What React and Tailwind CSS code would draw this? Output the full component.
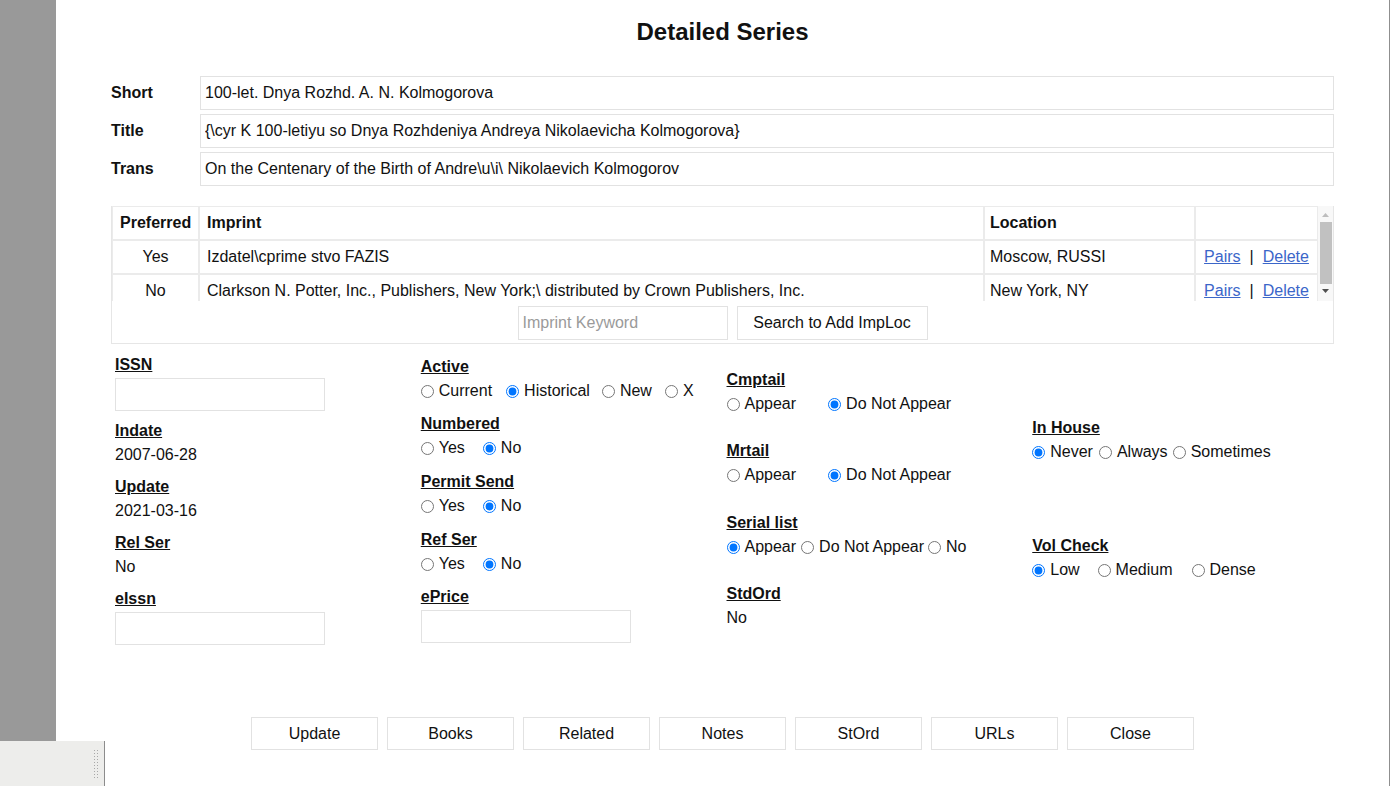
import React from 'react';

const font = { fontFamily: '"Liberation Sans", Arial, sans-serif' };

function Opt({ name, label, checked, className = '' }) {
  return (
    <label className={`inline-flex items-center gap-[5px] ${className}`}>
      <input
        type="radio"
        name={name}
        defaultChecked={checked}
        className="m-0 h-[13px] w-[13px] shrink-0"
      />
      <span>{label}</span>
    </label>
  );
}

function Lbl({ children }) {
  return <div className="font-bold underline leading-6">{children}</div>;
}

function Box({ className = '' }) {
  return <input className={`block h-[33px] w-[210px] border border-[#e2e2e2] bg-white px-1 outline-none ${className}`} />;
}

const rows = [
  ['Short', '100-let. Dnya Rozhd. A. N. Kolmogorova'],
  ['Title', '{\\cyr K 100-letiyu so Dnya Rozhdeniya Andreya Nikolaevicha Kolmogorova}'],
  ['Trans', 'On the Centenary of the Birth of Andre\\u\\i\\ Nikolaevich Kolmogorov'],
];

const imprints = [
  ['Yes', 'Izdatel\\cprime stvo FAZIS', 'Moscow, RUSSI'],
  ['No', 'Clarkson N. Potter, Inc., Publishers, New York;\\ distributed by Crown Publishers, Inc.', 'New York, NY'],
];

const buttons = ['Update', 'Books', 'Related', 'Notes', 'StOrd', 'URLs', 'Close'];

export default function App() {
  return (
    <div className="relative flex h-[786px] overflow-hidden bg-[#999999] text-[16px] text-[#111]" style={font}>
      <div className="w-[56px] shrink-0" />
      <div className="w-[1334px] shrink-0 border-r border-[#8f8f8f] bg-white px-[55px]">
        <h1 className="pt-[16px] text-center text-[24px] font-bold leading-8">Detailed Series</h1>

        <div className="mt-[28px] flex flex-col gap-[4px]">
          {rows.map(([k, v]) => (
            <div key={k} className="flex items-center">
              <div className="w-[89px] font-bold">{k}</div>
              <input
                defaultValue={v}
                className="h-[34px] flex-1 border border-[#e2e2e2] px-[4px] outline-none"
              />
            </div>
          ))}
        </div>

        <div className="mt-[20px] border border-[#e6e6e6]">
          <div className="-mt-px flex h-[95px] overflow-hidden">
            <div className="flex-1 overflow-hidden">
              <table className="w-full table-fixed border-separate border-spacing-0">
                <colgroup>
                  <col className="w-[87px]" />
                  <col className="w-[785px]" />
                  <col className="w-[211px]" />
                  <col />
                </colgroup>
                <thead>
                  <tr className="h-[34px]">
                    <th className="border border-[#ebebeb] px-[7px] text-left font-bold">Preferred</th>
                    <th className="border border-[#ebebeb] px-[7px] text-left font-bold">Imprint</th>
                    <th className="border border-[#ebebeb] px-[5px] text-left font-bold">Location</th>
                    <th className="border border-[#ebebeb]" />
                  </tr>
                </thead>
                <tbody>
                  {imprints.map(([p, imp, loc]) => (
                    <tr key={imp} className="h-[34px]">
                      <td className="border border-[#ebebeb] text-center">{p}</td>
                      <td className="whitespace-nowrap border border-[#ebebeb] px-[7px]">{imp}</td>
                      <td className="border border-[#ebebeb] px-[5px]">{loc}</td>
                      <td className="border border-[#ebebeb] text-center">
                        <a href="#" className="text-[#3b66c9] underline">Pairs</a>
                        <span className="mx-[9px]">|</span>
                        <a href="#" className="text-[#3b66c9] underline">Delete</a>
                      </td>
                    </tr>
                  ))}
                </tbody>
              </table>
            </div>
            <div className="flex w-[15px] shrink-0 flex-col items-center bg-[#f8f8f8]">
              <svg width="9" height="14" viewBox="0 0 9 14" className="mt-[2px]">
                <path d="M1 9 L4.5 5 L8 9 Z" fill="#bdbdbd" />
              </svg>
              <div className="h-[62px] w-[12px] bg-[#c1c1c1]" />
              <svg width="9" height="14" viewBox="0 0 9 14">
                <path d="M1 5 L4.5 9 L8 5 Z" fill="#505050" />
              </svg>
            </div>
          </div>
          <div className="mt-[5px] mb-[3px] flex justify-center gap-[9px]">
            <input
              placeholder="Imprint Keyword"
              className="h-[34px] w-[210px] border border-[#e2e2e2] px-[4px] outline-none placeholder:text-[#9a9a9a]"
            />
            <button className="h-[34px] w-[191px] border border-[#e2e2e2] bg-white">Search to Add ImpLoc</button>
          </div>
        </div>

        <div className="mt-[9px] grid h-[292px] grid-cols-4 items-center">
          <div className="pl-[4px]">
            <Lbl>ISSN</Lbl>
            <Box className="mt-[1px]" />
            <div className="mt-[8px]"><Lbl>Indate</Lbl></div>
            <div className="leading-6">2007-06-28</div>
            <div className="mt-[8px]"><Lbl>Update</Lbl></div>
            <div className="leading-6">2021-03-16</div>
            <div className="mt-[8px]"><Lbl>Rel Ser</Lbl></div>
            <div className="leading-6">No</div>
            <div className="mt-[8px]"><Lbl>eIssn</Lbl></div>
            <Box className="mt-[1px]" />
          </div>

          <div className="pl-[4px]">
            <Lbl>Active</Lbl>
            <div className="flex h-6 items-center">
              <Opt name="active" label="Current" className="mr-[14px]" />
              <Opt name="active" label="Historical" checked className="mr-[12px]" />
              <Opt name="active" label="New" className="mr-[13px]" />
              <Opt name="active" label="X" />
            </div>
            <div className="mt-[9px]"><Lbl>Numbered</Lbl></div>
            <div className="flex h-6 items-center">
              <Opt name="num" label="Yes" className="mr-[18px]" />
              <Opt name="num" label="No" checked />
            </div>
            <div className="mt-[10px]"><Lbl>Permit Send</Lbl></div>
            <div className="flex h-6 items-center">
              <Opt name="permit" label="Yes" className="mr-[18px]" />
              <Opt name="permit" label="No" checked />
            </div>
            <div className="mt-[10px]"><Lbl>Ref Ser</Lbl></div>
            <div className="flex h-6 items-center">
              <Opt name="refser" label="Yes" className="mr-[18px]" />
              <Opt name="refser" label="No" checked />
            </div>
            <div className="mt-[9px]"><Lbl>ePrice</Lbl></div>
            <Box className="mt-[1px]" />
          </div>

          <div className="pl-[4px]">
            <Lbl>Cmptail</Lbl>
            <div className="flex h-6 items-center">
              <Opt name="cmp" label="Appear" className="mr-[32px]" />
              <Opt name="cmp" label="Do Not Appear" checked />
            </div>
            <div className="mt-[23px]"><Lbl>Mrtail</Lbl></div>
            <div className="flex h-6 items-center">
              <Opt name="mr" label="Appear" className="mr-[32px]" />
              <Opt name="mr" label="Do Not Appear" checked />
            </div>
            <div className="mt-[24px]"><Lbl>Serial list</Lbl></div>
            <div className="flex h-6 items-center">
              <Opt name="serial" label="Appear" checked className="mr-[5px]" />
              <Opt name="serial" label="Do Not Appear" className="mr-[4px]" />
              <Opt name="serial" label="No" />
            </div>
            <div className="mt-[23px]"><Lbl>StdOrd</Lbl></div>
            <div className="leading-6">No</div>
          </div>

          <div className="pl-[4px]">
            <Lbl>In House</Lbl>
            <div className="flex h-6 items-center">
              <Opt name="house" label="Never" checked className="mr-[6px]" />
              <Opt name="house" label="Always" className="mr-[5px]" />
              <Opt name="house" label="Sometimes" />
            </div>
            <div className="mt-[70px]"><Lbl>Vol Check</Lbl></div>
            <div className="flex h-6 items-center">
              <Opt name="vol" label="Low" checked className="mr-[18px]" />
              <Opt name="vol" label="Medium" className="mr-[19px]" />
              <Opt name="vol" label="Dense" />
            </div>
          </div>
        </div>

        <div className="mt-[72px] flex justify-center gap-[9px]">
          {buttons.map((b) => (
            <button key={b} className="h-[33px] w-[127px] border border-[#e2e2e2] bg-white">
              {b}
            </button>
          ))}
        </div>
      </div>

      <div className="absolute bottom-0 left-0 flex h-[45px] w-[105px] items-center justify-end border-r border-[#8c8c8c] bg-[#ededeb] pr-[5px]">
        <svg width="5" height="28" viewBox="0 0 5 28">
          {Array.from({ length: 10 }).map((_, i) => (
            <g key={i}>
              <rect x="0" y={i * 3} width="1" height="1" fill="#a8a8a8" />
              <rect x="3" y={i * 3} width="1" height="1" fill="#a8a8a8" />
            </g>
          ))}
        </svg>
      </div>
    </div>
  );
}
